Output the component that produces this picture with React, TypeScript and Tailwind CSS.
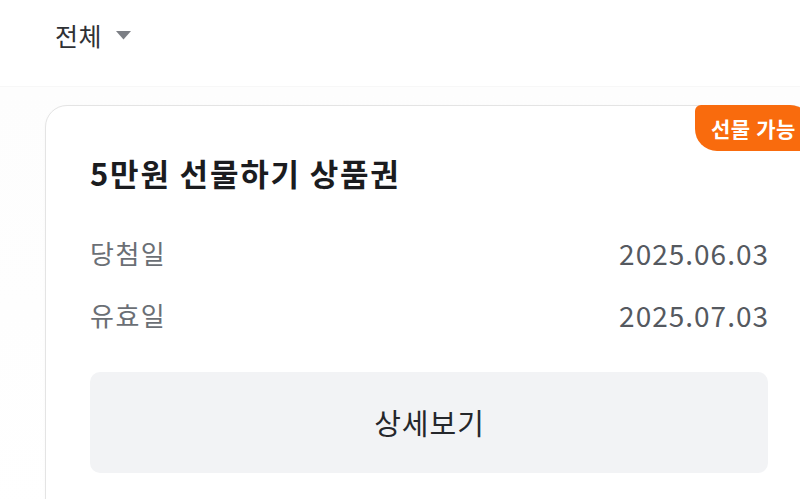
const font = { fontFamily: '"Noto Sans CJK KR", "Noto Sans", sans-serif' };

function Badge() {
  return (
    <div className="absolute right-0 top-[-1px] h-[46px] pl-[16px] pr-[16px] flex items-center bg-[#f96b0d] rounded-tl-[6px] rounded-bl-[22px] rounded-tr-[22px]">
      <span className="text-[21px] font-bold text-white leading-none tracking-[0.6px]">선물 가능</span>
    </div>
  );
}

function InfoRow({ label, value }: { label: string; value: string }) {
  return (
    <div className="flex items-center justify-between h-[36px]">
      <span className="text-[26px] text-[#6b6f75] leading-none tracking-[1.5px]">{label}</span>
      <span className="text-[28px] text-[#55595f] leading-none tracking-[1px] mr-[-1px]">{value}</span>
    </div>
  );
}

export default function App() {
  return (
    <div className="w-[800px] h-[499px] overflow-hidden bg-white" style={font}>
      {/* Header */}
      <div className="h-[86px] flex items-start pl-[55px] pt-[15px]">
        <div className="flex items-center gap-[14px]">
          <span className="text-[25px] text-[#2f3135] leading-[40px] tracking-[0.5px]">전체</span>
          <svg width="15" height="9" viewBox="0 0 15 9" className="mt-[1px]">
            <path d="M0 0 L15 0 L7.5 8.5 Z" fill="#7c7f85" />
          </svg>
        </div>
      </div>
      <div className="h-px bg-[#f7f7f7]" />

      {/* Body */}
      <div className="bg-gradient-to-b from-[#fdfdfd] to-white pt-[18px] pl-[45px]">
        <div className="relative w-[768px] h-[420px] bg-white border border-[#e4e4e4] rounded-[22px] pt-[47px] px-[44px] shadow-[0_1px_3px_rgba(0,0,0,0.03)]">
          <Badge />
          <h2 className="text-[31px] font-bold text-[#1b1c1f] leading-[40px] tracking-[1.8px]">5만원 선물하기 상품권</h2>
          <div className="mt-[42px] flex flex-col gap-[26px]">
            <InfoRow label="당첨일" value="2025.06.03" />
            <InfoRow label="유효일" value="2025.07.03" />
          </div>
          <button className="mt-[39px] w-full h-[101px] rounded-[10px] bg-[#f2f3f5] flex items-center justify-center">
            <span className="text-[29px] text-[#25272b] leading-none tracking-[1px] pl-[1px]">상세보기</span>
          </button>
        </div>
      </div>
    </div>
  );
}
